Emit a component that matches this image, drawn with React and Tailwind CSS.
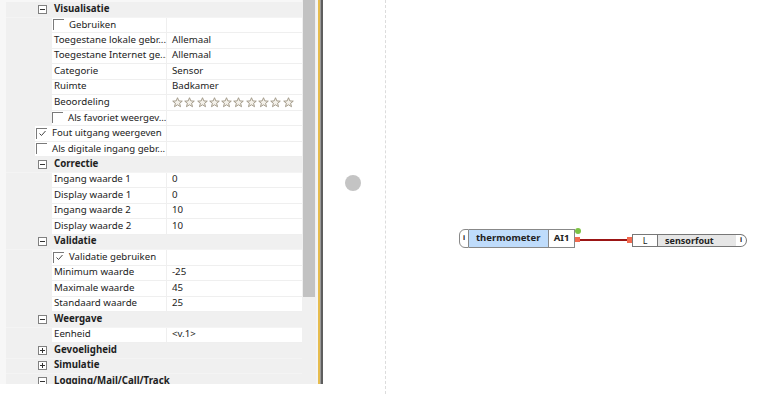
import React from "react";

const FONT = { fontFamily: '"Noto Sans", "Open Sans", Arial, sans-serif' };

const rows = [
  { type: "cat", label: "Visualisatie", open: true },
  { type: "item", label: "Gebruiken", check: false, indent: 2 },
  { type: "item", label: "Toegestane lokale gebr...", value: "Allemaal", indent: 2 },
  { type: "item", label: "Toegestane Internet ge...", value: "Allemaal", indent: 2 },
  { type: "item", label: "Categorie", value: "Sensor", indent: 2 },
  { type: "item", label: "Ruimte", value: "Badkamer", indent: 2 },
  { type: "item", label: "Beoordeling", stars: true, indent: 2 },
  { type: "item", label: "Als favoriet weergev...", check: false, indent: 2 },
  { type: "item", label: "Fout uitgang weergeven", check: true, indent: 1 },
  { type: "item", label: "Als digitale ingang gebr...", check: false, indent: 1 },
  { type: "cat", label: "Correctie", open: true },
  { type: "item", label: "Ingang waarde 1", value: "0", indent: 2 },
  { type: "item", label: "Display waarde 1", value: "0", indent: 2 },
  { type: "item", label: "Ingang waarde 2", value: "10", indent: 2 },
  { type: "item", label: "Display waarde 2", value: "10", indent: 2 },
  { type: "cat", label: "Validatie", open: true },
  { type: "item", label: "Validatie gebruiken", check: true, indent: 2 },
  { type: "item", label: "Minimum waarde", value: "-25", indent: 2 },
  { type: "item", label: "Maximale waarde", value: "45", indent: 2 },
  { type: "item", label: "Standaard waarde", value: "25", indent: 2 },
  { type: "cat", label: "Weergave", open: true },
  { type: "item", label: "Eenheid", value: "<v.1>", indent: 2 },
  { type: "cat", label: "Gevoeligheid", open: false },
  { type: "cat", label: "Simulatie", open: false },
  { type: "cat", label: "Logging/Mail/Call/Track", open: true },
];

function Toggle({ open }) {
  return (
    <svg width="9" height="9" viewBox="0 0 9 9" className="shrink-0">
      <rect x="0.5" y="0.5" width="8" height="8" fill="#fff" stroke="#808080" />
      <line x1="2" y1="4.5" x2="7" y2="4.5" stroke="#333" />
      {!open && <line x1="4.5" y1="2" x2="4.5" y2="7" stroke="#333" />}
    </svg>
  );
}

function Check({ on }) {
  return (
    <div className="w-[11px] h-[11px] border-t border-l border-[#7a7a7a] shrink-0 flex items-center justify-center">
      {on && (
        <svg width="9" height="9" viewBox="0 0 9 9">
          <path d="M1.5 4.5 L3.5 6.5 L7.5 2" fill="none" stroke="#444" strokeWidth="1" />
        </svg>
      )}
    </div>
  );
}

function Star() {
  return (
    <svg width="11" height="11" viewBox="0 0 12 12">
      <path
        d="M6 0.8 L7.5 4.3 L11.2 4.5 L8.3 6.9 L9.3 10.6 L6 8.5 L2.7 10.6 L3.7 6.9 L0.8 4.5 L4.5 4.3 Z"
        fill="#f4f1ea"
        stroke="#9c9482"
        strokeWidth="1"
      />
    </svg>
  );
}

function Row({ r }) {
  if (r.type === "cat") {
    return (
      <div className="h-[15.5px] flex items-center bg-[#f0f0f0] border-b border-[#f4f4f4]">
        <div className="w-[32px]" />
        <Toggle open={r.open} />
        <span className="ml-[7px] font-bold text-[9.7px] text-[#1e1e1e]">{r.label}</span>
      </div>
    );
  }
  const labelStart = r.indent === 2 ? 46 : 29;
  return (
    <div className="h-[15.5px] flex">
      <div style={{ width: labelStart }} className="bg-[#f0f0f0] shrink-0" />
      <div className="flex-1 flex bg-white border-b border-[#efefef]">
        <div
          className="flex items-center border-r border-[#efefef] overflow-hidden whitespace-nowrap shrink-0"
          style={{ width: 161 - labelStart }}
        >
          {r.check !== undefined ? (
            <>
              <div className="w-[1px]" />
              <Check on={r.check} />
              <span className="ml-[5px] text-[9.6px] text-[#222]">{r.label}</span>
            </>
          ) : (
            <span className="ml-[2px] text-[9.7px] text-[#222]">{r.label}</span>
          )}
        </div>
        <div className="flex-1 flex items-center pl-[5px] text-[9.7px] text-[#222] whitespace-nowrap">
          {r.stars ? (
            <div className="flex gap-[1.3px]">
              {Array.from({ length: 10 }).map((_, i) => (
                <Star key={i} />
              ))}
            </div>
          ) : (
            r.value
          )}
        </div>
      </div>
    </div>
  );
}

export default function App() {
  return (
    <div className="w-[773px] h-[394px] bg-white flex overflow-hidden" style={FONT}>
      {/* property grid */}
      <div className="h-[384px] flex shrink-0">
        <div className="w-[302px] h-full bg-[#f7f7f7] pl-[6px] pt-[2px] overflow-hidden">
          {rows.map((r, i) => (
            <Row key={i} r={r} />
          ))}
        </div>
        {/* scrollbar */}
        <div className="w-[14px] h-full bg-[#f0f0f0] flex flex-col">
          <div className="h-[297px] bg-[#c2c2c2] mx-[1px]" />
        </div>
        <div className="w-[2px] h-full bg-[#f4f4f4]" />
        <div className="w-[2px] h-full bg-[#e6bc4e]" />
        <div className="w-[1px] h-full bg-[#9a9a9a]" />
        <div className="w-[2px] h-full bg-[#5e5e5e]" />
      </div>

      {/* canvas */}
      <div className="relative flex-1 h-full">
        <div className="absolute left-[62px] top-0 bottom-0 border-l border-dashed border-[#dcdcdc]" />
        <div className="absolute left-[22px] top-[175px] w-[16px] h-[16px] rounded-full bg-[#c4c4c4]" />

        {/* thermometer block */}
        <div className="absolute left-[136px] top-[229px] h-[19px] flex text-[9.5px] font-bold text-[#222]">
          <div className="w-[10px] h-full border border-[#888] rounded-l-[6px] bg-white flex items-center justify-center text-[7px]">
            i
          </div>
          <div className="w-[79px] h-full border-y border-[#888] bg-[#bfdcfb] flex items-center pl-[7px]">
            thermometer
          </div>
          <div className="w-[27px] h-full border border-[#888] bg-white flex items-center justify-center">
            AI1
          </div>
        </div>
        <div className="absolute left-[252px] top-[228px] w-[6px] h-[6px] rounded-full bg-[#7cc242]" />
        <div className="absolute left-[252px] top-[237px] w-[5px] h-[5px] bg-[#f26a4f]" />
        <div className="absolute left-[257px] top-[239px] w-[48px] h-[2px] bg-[#9b1515]" />
        <div className="absolute left-[304px] top-[237px] w-[5px] h-[6px] bg-[#f26a4f]" />

        {/* sensorfout block */}
        <div className="absolute left-[309px] top-[234px] h-[13px] flex text-[9px] text-[#222]">
          <div className="w-[26px] h-full border border-[#777] bg-white flex items-center justify-center">
            L
          </div>
          <div className="w-[78px] h-full border-y border-[#777] bg-[#e6e6e6] flex items-center pl-[7px] font-bold">
            sensorfout
          </div>
          <div className="w-[11px] h-full border border-l-0 border-[#777] rounded-r-full bg-white flex items-center justify-center text-[7px] font-bold">
            i
          </div>
        </div>
      </div>
    </div>
  );
}
